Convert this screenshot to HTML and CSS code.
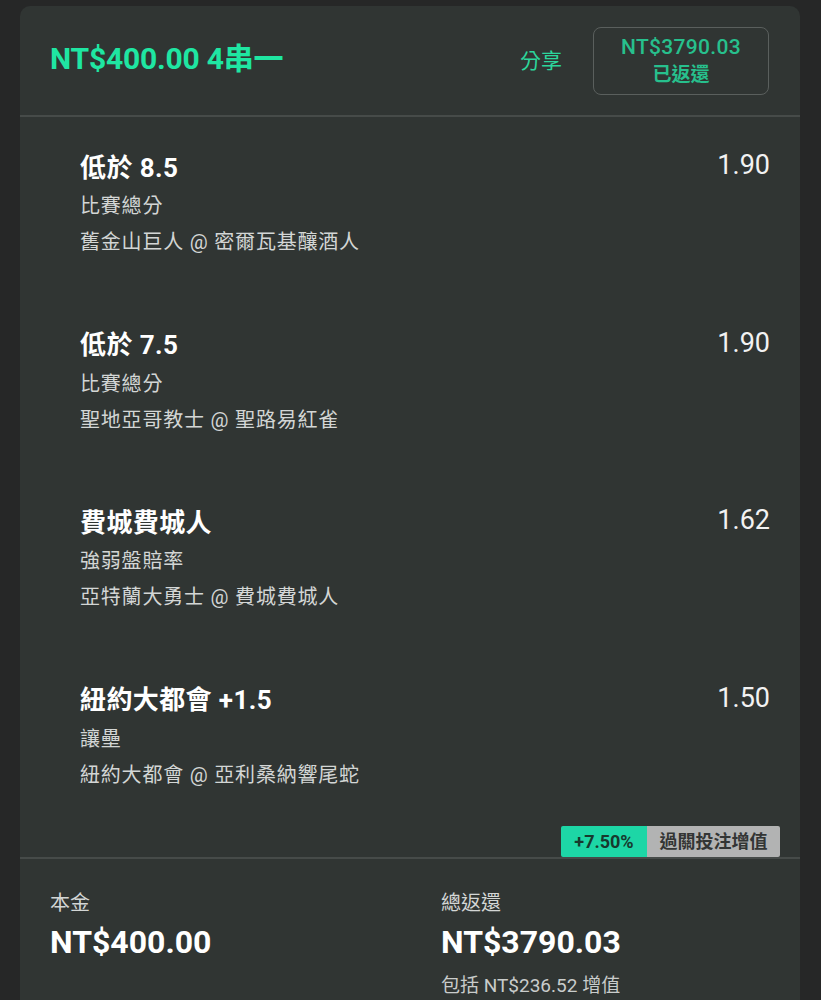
FILE: index.html
```html
<!DOCTYPE html>
<html lang="zh-Hant">
<head>
<meta charset="utf-8">
<link rel="stylesheet" href="styles.css">
</head>
<body>
<div class="card">
  <div class="header">
    <div class="title">NT$400.00 4串一</div>
    <div class="actions">
      <span class="share">分享</span>
      <div class="returned">
        <div class="ret-amt">NT$3790.03</div>
        <div class="ret-lbl">已返還</div>
      </div>
    </div>
  </div>
  <div class="legs">
    <div class="leg">
      <div class="leg-top"><span class="pick">低於 8.5</span><span class="odds">1.90</span></div>
      <div class="market">比賽總分</div>
      <div class="match">舊金山巨人 @ 密爾瓦基釀酒人</div>
    </div>
    <div class="leg">
      <div class="leg-top"><span class="pick">低於 7.5</span><span class="odds">1.90</span></div>
      <div class="market">比賽總分</div>
      <div class="match">聖地亞哥教士 @ 聖路易紅雀</div>
    </div>
    <div class="leg">
      <div class="leg-top"><span class="pick">費城費城人</span><span class="odds">1.62</span></div>
      <div class="market">強弱盤賠率</div>
      <div class="match">亞特蘭大勇士 @ 費城費城人</div>
    </div>
    <div class="leg">
      <div class="leg-top"><span class="pick">紐約大都會 +1.5</span><span class="odds">1.50</span></div>
      <div class="market">讓壘</div>
      <div class="match">紐約大都會 @ 亞利桑納響尾蛇</div>
    </div>
  </div>
  <div class="boost-row">
    <div class="boost"><span class="boost-pct">+7.50%</span><span class="boost-lbl">過關投注增值</span></div>
  </div>
  <div class="footer">
    <div class="col">
      <div class="f-lbl">本金</div>
      <div class="f-amt">NT$400.00</div>
    </div>
    <div class="col">
      <div class="f-lbl">總返還</div>
      <div class="f-amt">NT$3790.03</div>
      <div class="f-note">包括 NT$236.52 增值</div>
    </div>
  </div>
</div>
</body>
</html>
```

FILE: styles.css
```css
html, body {
  margin: 0;
  padding: 0;
  background: #262727;
  font-family: Roboto, "Noto Sans CJK TC", sans-serif;
  color: #ffffff;
}
body {
  padding: 6px 21px 0 20px;
  height: 1000px;
  box-sizing: border-box;
  overflow: hidden;
}
.card {
  background: #303533;
  border-radius: 10px;
  height: 1010px;
}
.header {
  height: 109px;
  display: flex;
  align-items: center;
  justify-content: space-between;
  padding: 0 31px 0 30px;
  border-bottom: 2px solid #464b49;
}
.title {
  color: #1fe6a2;
  font-size: 30px;
  font-weight: 700;
  letter-spacing: -0.2px;
  margin-top: -10px;
}
.actions {
  display: flex;
  align-items: center;
  gap: 31px;
  margin-top: 0;
}
.share {
  color: #2cd69c;
  font-size: 21px;
  margin-top: -4px;
}
.returned {
  width: 174px;
  height: 66px;
  border: 1px solid #5a5f5d;
  border-radius: 8px;
  display: flex;
  flex-direction: column;
  align-items: center;
  justify-content: center;
  color: #27c08d;
  line-height: 28px;
}
.ret-amt {
  font-size: 21px;
  font-weight: 500;
  letter-spacing: 0.3px;
}
.ret-lbl {
  font-size: 19px;
  font-weight: 700;
}
.legs {
  padding: 30px 30px 0 60px;
  display: flex;
  flex-direction: column;
  gap: 64.5px;
}
.leg-top {
  display: flex;
  justify-content: space-between;
  align-items: center;
  height: 36px;
}
.pick {
  font-size: 26px;
  font-weight: 700;
  letter-spacing: 0.4px;
}
.odds {
  font-size: 27px;
  font-weight: 400;
  color: #f2f2f2;
}
.market, .match {
  font-size: 20px;
  letter-spacing: 0.8px;
  line-height: 36px;
  color: #d3d6d5;
}
.market {
  margin-top: 5px;
}
.boost-row {
  display: flex;
  justify-content: flex-end;
  padding: 33px 20px 0 0;
}
.boost {
  display: flex;
  height: 31px;
  font-size: 18px;
  font-weight: 700;
  line-height: 31px;
  border-radius: 2px;
  overflow: hidden;
}
.boost-pct {
  background: #1dd6a6;
  color: #17392e;
  width: 86px;
  text-align: center;
}
.boost-lbl {
  background: #b2b3b3;
  color: #333534;
  width: 133px;
  text-align: center;
}
.footer {
  border-top: 2px solid #464b49;
  display: grid;
  grid-template-columns: 391px 1fr;
  padding: 28px 30px 0 30px;
}
.f-lbl {
  font-size: 20px;
  line-height: 32px;
  color: #d3d6d5;
}
.f-amt {
  font-size: 32px;
  font-weight: 700;
  line-height: 44px;
  margin-top: 1px;
}
.f-note {
  font-size: 19px;
  line-height: 32px;
  color: #c9cccb;
  margin-top: 6px;
}
```
